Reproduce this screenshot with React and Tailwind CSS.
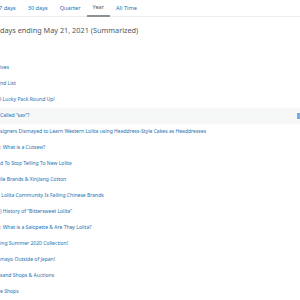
import React from "react";

const rows = [
  "",
  "ives",
  "nd List",
  "l Lucky Pack Round Up!",
  "Called \u201Csax\u201D?",
  "signers Dismayed to Learn Western Lolita using Headdress-Style Cakes as Headdresses",
  ": What is a Cutsew?",
  "d To Stop Telling To New Lolita",
  "ile Brands & Xinjiang Cotton",
  " Lolita Community Is Failing Chinese Brands",
  ") History of \u201CBittersweet Lolita\u201D",
  ": What is a Salopette & Are They Lolita?",
  "ing Summer 2020 Collection!",
  "mayo Outside of Japan!",
  "sand Shops & Auctions",
  "e Shops",
];

const tabs = ["7 days", "30 days", "Quarter", "Year", "All Time"];

export default function App() {
  return (
    <div className="w-[300px] h-[300px] overflow-hidden bg-white font-['Noto_Sans',sans-serif]">
      <div className="flex h-[17px] border-b border-[#eeeeee] text-[5.6px] -ml-[7px]">
        {tabs.map((t) => (
          <div
            key={t}
            className={
              t === "Year"
                ? "px-[6px] flex items-center border-b-2 border-[#8c8f94] text-[#50575e] -mb-[1px]"
                : "px-[6px] flex items-center text-[#2271b1]"
            }
          >
            {t}
          </div>
        ))}
      </div>
      <div className="h-[27px] flex items-center text-[7.3px] text-[#50575e]">
        days ending May 21, 2021 (Summarized)
      </div>
      <div>
        {rows.map((r, i) => (
          <div
            key={i}
            className={
              i === 4
                ? "h-4 flex items-center justify-between bg-[#f6f7f7] text-[5.05px] text-[#2271b1]"
                : "h-4 flex items-center text-[5.05px] text-[#2271b1]"
            }
          >
            <span className="whitespace-pre">{r}</span>
            {i === 4 && <span className="w-[3px] h-[6px] bg-[#72aee6]" />}
          </div>
        ))}
      </div>
    </div>
  );
}
